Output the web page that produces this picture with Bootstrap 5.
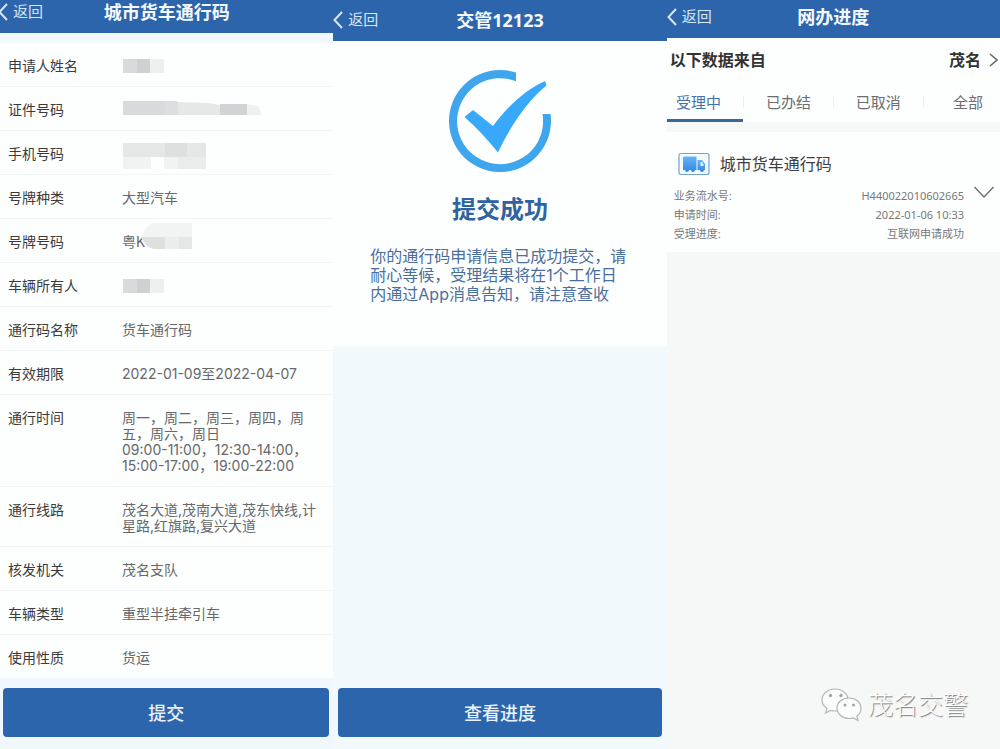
<!DOCTYPE html>
<html lang="zh-CN">
<head>
<meta charset="utf-8">
<meta name="viewport" content="width=device-width, initial-scale=1">
<title>城市货车通行码</title>
<link rel="stylesheet" href="https://cdn.jsdelivr.net/npm/bootstrap@5.3.0/dist/css/bootstrap.min.css">
<style>
  :root { --brand: #2c65ab; --ink: #3c3c3f; --soft: #66686a; }
  body { font-family: Inter, "Noto Sans CJK SC", sans-serif; color: var(--ink); background: #f4f9fc; }
  .screen { min-height: 100vh; }
  .screen-form { background: #f0f8fd; }
  .screen-done { background: #f1f9fc; }
  .screen-list { background: #f6f7f7; }

  .topbar { display: grid; grid-template-columns: 1fr auto 1fr; align-items: center; background: var(--brand); padding: 0 0 9px; }
  .topbar h1 { font: 700 18px/24px "Noto Sans", "Noto Sans CJK SC", sans-serif; color: #f4f8fc; margin: 0; }
  .back { font-size: 15px; line-height: 24px; color: #d8e6f5; gap: 5px; }
  .screen-form .back { margin-left: -2px; }
  .screen-done .topbar { padding-top: 8px; }
  .screen-list .topbar { padding-top: 5px; }

  .info { margin: 10px 0 0; background: #fdfefe; font-size: 14px; line-height: 16px; }
  .info > div { display: grid; grid-template-columns: 114px 1fr; padding: 15px 0 12px 8px; border-bottom: 1px solid #f1f4f5; }
  .info > div:last-child { border-bottom: 0; }
  .info dt { font-weight: 400; color: #3a3b3d; }
  .info dd { margin: 0; color: var(--soft); white-space: nowrap; }
  .masked { display: block; overflow: visible; }
  .plate .masked { margin-left: -4px; }

  .btn-brand { --bs-btn-color: #eaf2fa; --bs-btn-bg: var(--brand); --bs-btn-hover-color: #fff; --bs-btn-hover-bg: #245694;
    --bs-btn-active-color: #fff; --bs-btn-active-bg: #1f4c84; --bs-btn-border-radius: 4px; font-size: 18px; line-height: 24px; font-weight: 500; padding: 14px 12px 11px; border: 0; }
  .bottom-form { padding: 8px 4px 12px 3px; }
  .bottom-done { padding: 8px 5px 12px; }

  .result { background: #fdfefe; padding: 29px 37px 42px; }
  .result h2 { font-size: 24px; line-height: 32px; font-weight: 700; color: #2f639f; margin: 22px 0 21px; }
  .result p { font-size: 16px; line-height: 19px; color: #4a6f9c; margin: 0; white-space: nowrap; }

  .source { background: #fdfefe; padding: 10px 2px 9px 3px; font-size: 16px; line-height: 24px; font-weight: 700; color: #333; }
  .source a { color: inherit; gap: 8px; }
  .tabstrip { overflow: hidden; background: #fdfefe; }
  .tabstrip .nav { margin: 0 -13px; }
  .tabstrip .nav-link { font-size: 15px; line-height: 22px; color: #6b6d70; padding: 11px 0 5px; border-bottom: 3px solid transparent; position: relative; }
  .tabstrip .nav-link.active { color: #4673a5; border-color: #3c6695; }
  .tabstrip .nav-item + .nav-item .nav-link::before { content: ""; position: absolute; left: 0; top: 15px; height: 12px; border-left: 1px solid #eeeff0; }

  .record { background: #fdfefe; margin-top: 10px; padding: 20px 6px 9px 7px; }
  .record h2 { font-size: 16px; line-height: 24px; font-weight: 400; margin: 0; color: #3f4042; }
  .record-title { gap: 10px; padding-left: 4px; margin-bottom: 10px; }
  .record dl { margin: 0; font-family: "Noto Sans", "Noto Sans CJK SC", sans-serif; font-size: 11px; line-height: 19px; color: #77797b; }
  .record dt { font-weight: 400; }
  .record dd { margin: 0; }
  .record-body { gap: 10px; }

  .account { gap: 6px; padding: 0 32px 26px; font-size: 25px; line-height: 36px; font-weight: 300; color: #fff; text-shadow: 1px 1px 1px #777; }
</style>
</head>
<body>
<div class="container-fluid p-0">
  <div class="row g-0">

    <section class="col-12 col-md-4 screen screen-form d-flex flex-column">
      <header class="topbar">
        <a href="#" class="back d-flex align-items-center text-decoration-none">
          <svg width="10" height="18" viewBox="0 0 10 18" fill="none" stroke="currentColor" stroke-width="2"><path d="M9 1 1.500 9 9 17"/></svg>返回</a>
        <h1>城市货车通行码</h1>
      </header>
      <dl class="info">
        <div><dt>申请人姓名</dt><dd>
          <svg class="masked" width="42" height="16"><path fill="#d9dadb" d="M1 1h14v14H1z"/><path fill="#cfd0d1" d="M15 1h13v14H15z"/><path fill="#eeefef" d="M28 1h14v14H28z"/></svg></dd></div>
        <div><dt>证件号码</dt><dd>
          <svg class="masked" width="140" height="16"><path fill="#d9dadb" d="M1-1h42v14H1z"/><path fill="#dddedf" d="M43-1h11l2 1v13H43z"/><path fill="#e6e7e7" d="M56 0l30 1 12 2v10H56z"/><path fill="#d2d3d4" d="M98 2h27v11H98z"/><path fill="#eff0f0" d="M125 2l11 2 3 5v4h-14z"/></svg></dd></div>
        <div><dt>手机号码</dt><dd>
          <svg class="masked" width="84" height="16"><path fill="#e5e6e6" d="M1-3h83v14H1z"/><path fill="#dedfdf" d="M43-3h22v14H43z"/><path fill="#f1f2f2" d="M1 11h28v12H1zM42 11h14v12H42z"/><path fill="#eaebeb" d="M56 11h28v12H56z"/></svg></dd></div>
        <div><dt>号牌种类</dt><dd>大型汽车</dd></div>
        <div><dt>号牌号码</dt><dd class="plate d-flex">粤K
          <svg class="masked" width="52" height="16"><path fill="#f2f3f3" d="M2 1C3-7 9-11 15-11h36V3H1z"/><path fill="#dedfdf" d="M0 3h24v12H14C8 15 3 10 0 3z"/><path fill="#ececed" d="M24 3h14v12H24z"/><path fill="#e5e6e6" d="M38 3h13v12H38z"/></svg></dd></div>
        <div><dt>车辆所有人</dt><dd>
          <svg class="masked" width="42" height="16"><path fill="#d9dadb" d="M1 1h14v14H1z"/><path fill="#cfd0d1" d="M15 1h13v14H15z"/><path fill="#eeefef" d="M28 1h14v14H28z"/></svg></dd></div>
        <div><dt>通行码名称</dt><dd>货车通行码</dd></div>
        <div><dt>有效期限</dt><dd>2022-01-09至2022-04-07</dd></div>
        <div><dt>通行时间</dt><dd>周一，周二，周三，周四，周<br>五，周六，周日<br>09:00-11:00，12:30-14:00，<br>15:00-17:00，19:00-22:00</dd></div>
        <div><dt>通行线路</dt><dd>茂名大道,茂南大道,茂东快线,计<br>星路,红旗路,复兴大道</dd></div>
        <div><dt>核发机关</dt><dd>茂名支队</dd></div>
        <div><dt>车辆类型</dt><dd>重型半挂牵引车</dd></div>
        <div><dt>使用性质</dt><dd>货运</dd></div>
      </dl>
      <div class="bottom-form mt-auto"><button type="button" class="btn btn-brand w-100">提交</button></div>
    </section>

    <section class="col-12 col-md-4 screen screen-done d-flex flex-column">
      <header class="topbar">
        <a href="#" class="back d-flex align-items-center text-decoration-none">
          <svg width="10" height="18" viewBox="0 0 10 18" fill="none" stroke="currentColor" stroke-width="2"><path d="M9 1 1.500 9 9 17"/></svg>返回</a>
        <h1>交管12123</h1>
      </header>
      <div class="result">
        <svg class="d-block mx-auto" width="102" height="102" viewBox="0 0 102 102">
          <path d="M67 2.600A51 51 0 1 0 101.500 44H93.500A43 43 0 1 1 67 11.200z" fill="#3fa6ee"/>
          <path d="M15.500 47 24 40 44 56C58 37 76 20 96 11l1.500 4.500C78 31 61 57 49 82.500 38 69 28 58 15.500 47z" fill="#38a8fb"/>
        </svg>
        <h2 class="text-center">提交成功</h2>
        <p>你的通行码申请信息已成功提交，请<br>耐心等候，受理结果将在1个工作日<br>内通过App消息告知，请注意查收</p>
      </div>
      <div class="bottom-done mt-auto"><button type="button" class="btn btn-brand w-100">查看进度</button></div>
    </section>

    <section class="col-12 col-md-4 screen screen-list d-flex flex-column">
      <header class="topbar">
        <a href="#" class="back d-flex align-items-center text-decoration-none">
          <svg width="10" height="18" viewBox="0 0 10 18" fill="none" stroke="currentColor" stroke-width="2"><path d="M9 1 1.500 9 9 17"/></svg>返回</a>
        <h1>网办进度</h1>
      </header>
      <div class="source d-flex justify-content-between">
        <span>以下数据来自</span>
        <a href="#" class="d-flex align-items-center text-decoration-none">茂名
          <svg width="9" height="14" viewBox="0 0 9 14" fill="none" stroke="#666" stroke-width="1.500"><path d="M1 1l7 6-7 6"/></svg></a>
      </div>
      <nav class="tabstrip">
        <ul class="nav nav-fill flex-nowrap">
          <li class="nav-item w-25"><a class="nav-link active" aria-current="page" href="#">受理中</a></li>
          <li class="nav-item w-25"><a class="nav-link" href="#">已办结</a></li>
          <li class="nav-item w-25"><a class="nav-link" href="#">已取消</a></li>
          <li class="nav-item w-25"><a class="nav-link" href="#">全部</a></li>
        </ul>
      </nav>
      <article class="record">
        <div class="record-title d-flex align-items-center">
          <svg width="32" height="24" viewBox="0 0 32 24">
            <defs><linearGradient id="truck" x2="0" y2="1"><stop stop-color="#65b5f6"/><stop offset="1" stop-color="#2f86e6"/></linearGradient></defs>
            <rect x="1" y="1.500" width="30" height="21" rx="2" fill="#f5faff" stroke="#6da5d0" stroke-width="1.200"/>
            <path fill="url(#truck)" d="M6 4.500h12.500v13.500H17a2 2 0 0 1-4 0h-2a2 2 0 0 1-4 0H5V5.500z"/>
            <path fill="url(#truck)" d="M19.500 8H24l3 4v6h-1a2 2 0 0 1-4 0h-2.500z"/>
            <path fill="#e2f1ff" d="M22.500 10h1.500l1.500 2.500V14h-3z"/>
          </svg>
          <h2>城市货车通行码</h2>
        </div>
        <div class="record-body d-flex align-items-start">
          <dl class="flex-grow-1">
            <div class="d-flex justify-content-between"><dt>业务流水号:</dt><dd>H440022010602665</dd></div>
            <div class="d-flex justify-content-between"><dt>申请时间:</dt><dd>2022-01-06 10:33</dd></div>
            <div class="d-flex justify-content-between"><dt>受理进度:</dt><dd>互联网申请成功</dd></div>
          </dl>
          <button type="button" class="btn p-0 border-0 lh-1" aria-label="展开">
            <svg class="d-block" width="20" height="12" viewBox="0 0 20 12" fill="none" stroke="#6e6f70" stroke-width="1.400"><path d="M.5 1 10 11 19.500 1"/></svg>
          </button>
        </div>
      </article>
      <div class="account mt-auto d-flex justify-content-end align-items-center">
        <svg width="41" height="34" viewBox="0 0 41 34" fill="#fbfcfc" stroke="#b4b6b7" stroke-width="1.200">
          <path d="M14 1C6.500 1 1 6 1 12c0 3.500 2 6.500 5 8.500L4.500 25l5-2.500c1.500.4 3 .5 4.500.5 7.500 0 13-5 13-11S21.500 1 14 1z"/>
          <path d="M28 10c-7 0-12 4.500-12 10s5 10.500 12 10.500c1.500 0 3-.2 4.500-.6l4.500 2.600-1.200-4.200C38.500 26.300 40 23.500 40 20.500 40 14.500 35 10 28 10z"/>
          <g fill="#a3a5a6" stroke="none"><circle cx="9.500" cy="7.500" r="1.700"/><circle cx="20" cy="7.500" r="1.700"/><circle cx="24" cy="17" r="1.500"/><circle cx="32.500" cy="17" r="1.500"/></g>
        </svg>
        <span>茂名交警</span>
      </div>
    </section>

  </div>
</div>
<script src="https://cdn.jsdelivr.net/npm/bootstrap@5.3.0/dist/js/bootstrap.bundle.min.js"></script>
</body>
</html>
